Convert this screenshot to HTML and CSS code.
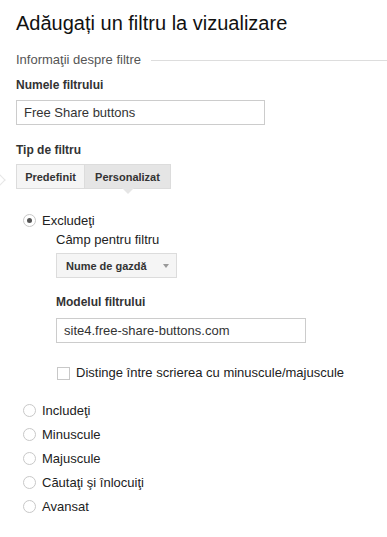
FILE: index.html
```html
<!DOCTYPE html>
<html lang="ro">
<head>
    <meta charset="UTF-8">
    <meta name="viewport" content="width=device-width, initial-scale=1.0">
    <title>Adăugați un filtru la vizualizare</title>
    <link rel="stylesheet" href="styles.css">
</head>
<body>
    <div class="page">
        <h1>Adăugați un filtru la vizualizare</h1>

        <div class="section-title">
            <span>Informaţii despre filtre</span>
            <div class="rule"></div>
        </div>

        <label class="field-label" for="name">Numele filtrului</label>
        <input class="text-input name-input" id="name" type="text" value="Free Share buttons">

        <div class="field-label type-label">Tip de filtru</div>
        <div class="tabs-row">
            <span class="side-arrow"></span>
            <div class="tabs">
                <button class="tab">Predefinit</button>
                <button class="tab active">Personalizat</button>
            </div>
        </div>

        <div class="options">
            <label class="radio-row"><span class="radio checked"></span>Excludeţi</label>
            <div class="sub">
                <div class="sub-label">Câmp pentru filtru</div>
                <div class="select">Nume de gazdă <span class="caret"></span></div>

                <div class="field-label model-label">Modelul filtrului</div>
                <input class="text-input model-input" type="text" value="site4.free-share-buttons.com">

                <label class="check-row"><span class="checkbox"></span>Distinge între scrierea cu minuscule/majuscule</label>
            </div>

            <label class="radio-row"><span class="radio"></span>Includeţi</label>
            <label class="radio-row"><span class="radio"></span>Minuscule</label>
            <label class="radio-row"><span class="radio"></span>Majuscule</label>
            <label class="radio-row"><span class="radio"></span>Căutaţi şi înlocuiţi</label>
            <label class="radio-row"><span class="radio"></span>Avansat</label>
        </div>
    </div>
</body>
</html>
```

FILE: styles.css
```css
body {
    margin: 0;
    font-family: Arial, "Liberation Sans", sans-serif;
    background: #fff;
    color: #222;
}
.page {
    padding: 11px 0 0 16px;
}
h1 {
    margin: 0;
    font-size: 20px;
    font-weight: normal;
    color: #111;
    line-height: 24px;
}
.section-title {
    display: flex;
    align-items: center;
    margin-top: 17px;
    font-size: 13px;
    color: #555;
    line-height: 16px;
}
.section-title .rule {
    flex: 1;
    height: 1px;
    background: #ddd;
    margin-left: 10px;
}
.field-label {
    display: block;
    font-size: 12px;
    font-weight: bold;
    color: #333;
    line-height: 15px;
}
.section-title + .field-label {
    margin-top: 10px;
}
.text-input {
    display: block;
    box-sizing: border-box;
    height: 25px;
    border: 1px solid #ccc;
    font-family: inherit;
    font-size: 13px;
    color: #333;
    padding: 0 7px;
    margin: 0;
    outline: none;
}
.name-input {
    width: 249px;
    margin-top: 7px;
}
.type-label {
    margin-top: 18px;
}
.tabs-row {
    position: relative;
    margin-top: 6px;
}
.side-arrow {
    position: absolute;
    left: -20px;
    top: 12px;
    width: 7px;
    height: 7px;
    border-top: 1px solid #e6e6e6;
    border-right: 1px solid #e6e6e6;
    transform: rotate(45deg);
}
.tabs {
    display: inline-flex;
}
.tab {
    height: 25px;
    width: 69px;
    padding: 0;
    border: 1px solid #dcdcdc;
    background: #f5f5f5;
    font-family: inherit;
    font-size: 11px;
    font-weight: bold;
    color: #333;
    margin: 0;
    cursor: pointer;
}
.tab.active {
    position: relative;
    width: 86px;
    background: #e5e5e5;
    border-left: none;
}
.tab.active::after {
    content: "";
    position: absolute;
    left: 50%;
    bottom: -6px;
    margin-left: -6px;
    width: 0;
    height: 0;
    border-left: 6px solid transparent;
    border-right: 6px solid transparent;
    border-top: 6px solid #e5e5e5;
}
.options {
    margin-top: 19px;
    padding-left: 7px;
}
.radio-row {
    display: flex;
    align-items: center;
    height: 24px;
    font-size: 13px;
    color: #222;
}
.radio {
    box-sizing: border-box;
    width: 13px;
    height: 13px;
    border: 1px solid #c8c8c8;
    border-radius: 50%;
    margin-right: 6px;
    background: #fff;
    display: flex;
    align-items: center;
    justify-content: center;
}
.radio.checked::after {
    content: "";
    width: 5px;
    height: 5px;
    border-radius: 50%;
    background: #555;
}
.sub {
    padding-left: 33px;
    margin-bottom: 17px;
}
.sub-label {
    font-size: 13px;
    color: #222;
    line-height: 16px;
}
.select {
    display: inline-flex;
    align-items: center;
    box-sizing: border-box;
    height: 25px;
    margin-top: 5px;
    padding: 0 7px 0 9px;
    border: 1px solid #dcdcdc;
    background: #f5f5f5;
    font-size: 11px;
    font-weight: bold;
    color: #333;
}
.caret {
    width: 0;
    height: 0;
    margin-left: 16px;
    border-left: 3px solid transparent;
    border-right: 3px solid transparent;
    border-top: 4px solid #999;
}
.model-label {
    margin-top: 17px;
}
.model-input {
    width: 250px;
    margin-top: 8px;
}
.check-row {
    display: flex;
    align-items: center;
    margin-top: 22px;
    font-size: 13px;
    color: #222;
    line-height: 16px;
}
.checkbox {
    box-sizing: border-box;
    width: 13px;
    height: 13px;
    border: 1px solid #c8c8c8;
    margin: 0 6px 0 1px;
}
```
